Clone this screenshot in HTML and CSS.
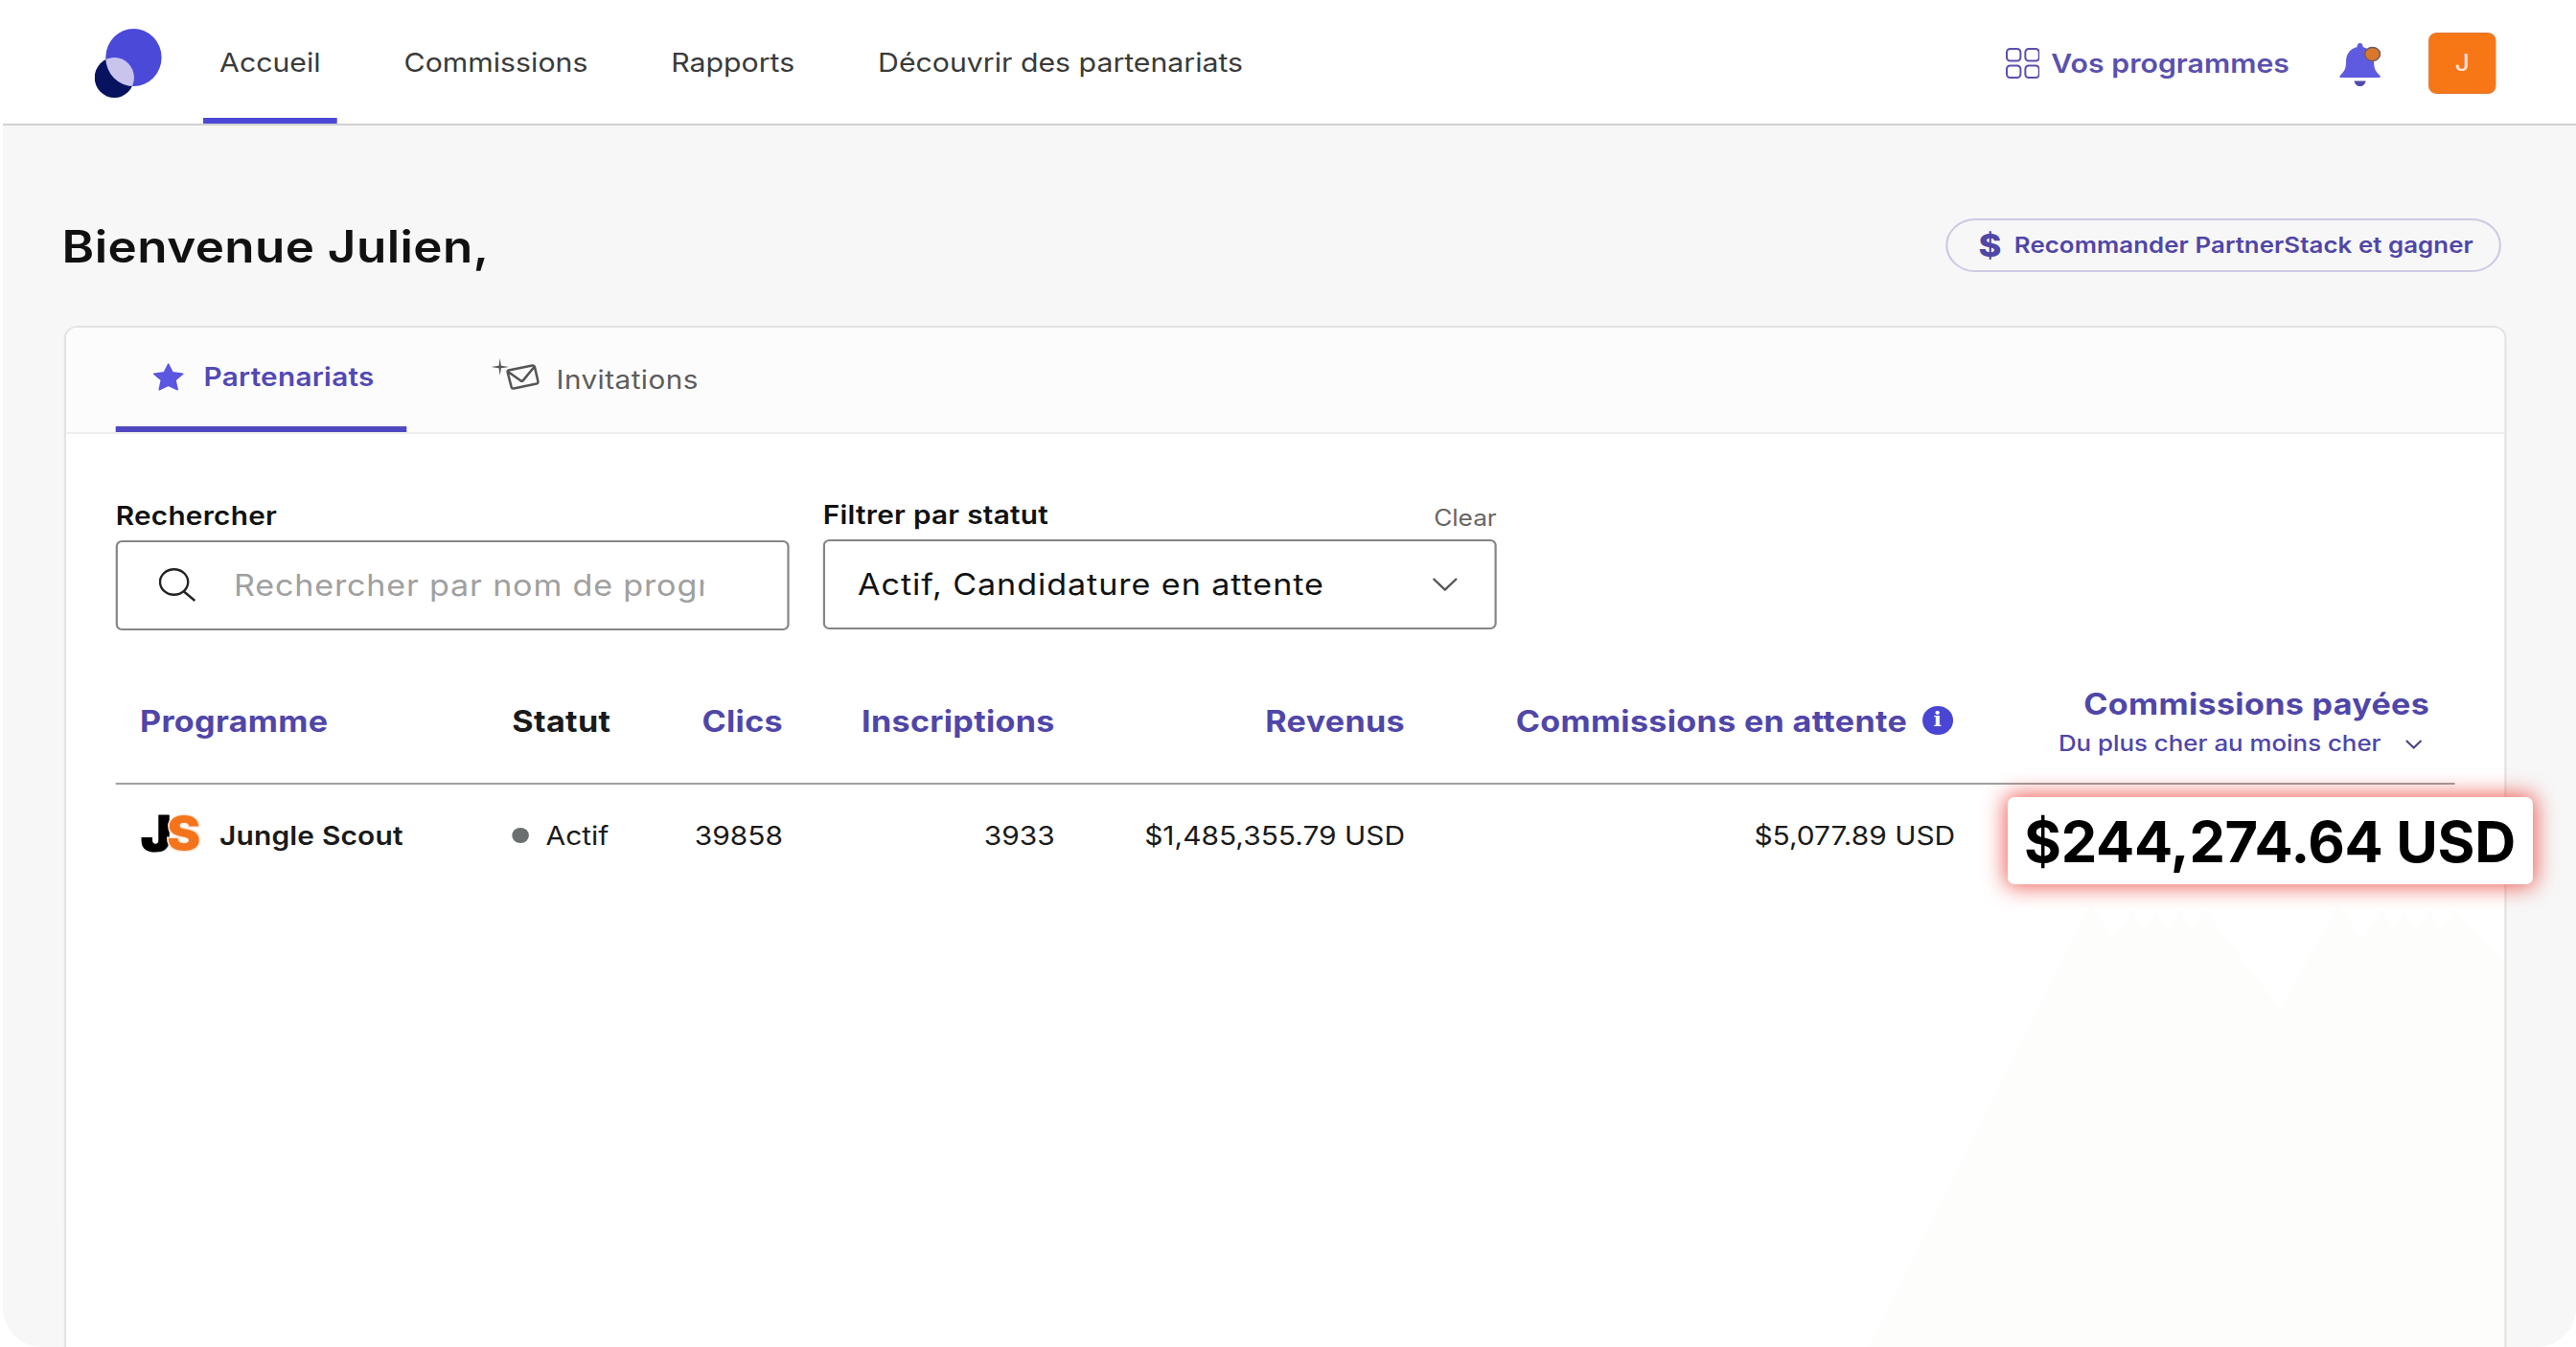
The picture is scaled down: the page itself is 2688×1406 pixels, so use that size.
FILE: index.html
```html
<!DOCTYPE html>
<html lang="fr">

<head>
    <meta charset="utf-8">
    <title>Accueil</title>
    <link rel="stylesheet" href="styles.css">
</head>

<body>
    <div class="app">
        <header class="topbar">
            <svg class="logo" viewBox="0 0 70 72" preserveAspectRatio="none">
                <defs>
                    <clipPath id="big"><ellipse cx="40.5" cy="30" rx="29" ry="30" /></clipPath>
                </defs>
                <ellipse cx="20.5" cy="51" rx="20.5" ry="21" fill="#07135f" />
                <ellipse cx="40.5" cy="30" rx="29" ry="30" fill="#4b49d8" />
                <ellipse cx="20.5" cy="51" rx="20.5" ry="21" fill="#c8c4ec" clip-path="url(#big)" />
            </svg>
            <nav class="nav">
                <a class="nav-link active">Accueil</a>
                <a class="nav-link">Commissions</a>
                <a class="nav-link">Rapports</a>
                <a class="nav-link">Découvrir des partenariats</a>
            </nav>
            <div class="account">
                <a class="programs">
                    <svg class="grid-icon" viewBox="0 0 36 32" preserveAspectRatio="none">
                        <rect x="1" y="1" width="14.5" height="12.5" rx="3.5" />
                        <rect x="20.5" y="1" width="14.5" height="12.5" rx="3.5" />
                        <rect x="1" y="18.5" width="14.5" height="12.5" rx="3.5" />
                        <rect x="20.5" y="18.5" width="14.5" height="12.5" rx="3.5" />
                    </svg>
                    <span>Vos programmes</span>
                </a>
                <svg class="bell" viewBox="0 0 44 45" preserveAspectRatio="none">
                    <path d="M22 0c-2 0-3 1.500-3 4C11 6 7.500 12 7.500 19c0 8-2 11-6.500 15v2h42v-2c-4.500-4-6.500-7-6.500-15 0-7-3.500-13-11.500-15 0-2.500-1-4-3-4z" fill="#5f5be0" />
                    <path d="M16 39.500h12c-.5 3.500-3 5.500-6 5.500s-5.500-2-6-5.500z" fill="#524aae" />
                    <ellipse cx="35" cy="11.500" rx="8" ry="7" fill="#d9772b" stroke="#6d5a63" stroke-width="1.500" />
                </svg>
                <div class="avatar">J</div>
            </div>
        </header>

        <main class="main">
            <div class="welcome">
                <h1>Bienvenue Julien,</h1>
                <a class="refer"><b class="dollar">$</b><span>Recommander PartnerStack et gagner</span></a>
            </div>

            <section class="panel">
                <!-- mountains in the corner of the panel -->
                <svg class="mountains" viewBox="0 0 664 466" preserveAspectRatio="none">
                    <path d="M0 466L232 5l24 35 20-30 12 18 12-16 12 18 14-20 12 20 14-20L430 113 490 5l26 35 20-30 12 18 12-16 12 18 14-20 12 20 14-20L664 60V466z" />
                </svg>

                <div class="tabs">
                    <a class="tab active">
                        <svg class="star" viewBox="0 0 34 29" preserveAspectRatio="none">
                            <path d="M17 1l4.600 8.800 11 1.400-8 6.500 2.200 10L17 23.200 7.200 27.700l2.200-10-8-6.500 11-1.400z" fill="#5b57e0" stroke="#5b57e0" stroke-width="1.500" stroke-linejoin="round" />
                        </svg>
                        <span>Partenariats</span>
                    </a>
                    <a class="tab invites">
                        <svg class="mail" viewBox="0 0 51 33" preserveAspectRatio="none">
                            <path d="M9.500 0l1.200 7.800 8.300 1.200-8.300 1.300L9.500 18 8.300 10.300 0 9l8.300-1.200z" fill="#555" />
                            <path d="M18.500 12.500L43.500 7.500q2-.3 2.500 1.500L49.500 24q.3 2-1.500 2.500L24 31.500q-2 .3-2.500-1.500L17.500 14.500q-.3-1.500 1-2zM18 14l13.500 9.500q1.500.8 2.500-.7L45.500 9" fill="none" stroke="#555" stroke-width="2.600" stroke-linejoin="round" stroke-linecap="round" />
                        </svg>
                        <span>Invitations</span>
                    </a>
                </div>

                <div class="content">
                    <div class="filters">
                        <div class="field">
                            <div class="label-row"><label>Rechercher</label></div>
                            <div class="box">
                                <svg class="search-icon" viewBox="0 0 39 35" preserveAspectRatio="none">
                                    <ellipse cx="16" cy="14.500" rx="14.800" ry="13.300" />
                                    <path d="M26.500 24.500L38 34" />
                                </svg>
                                <input type="text" class="search" placeholder="Rechercher par nom de programme">
                            </div>
                        </div>
                        <div class="field status">
                            <div class="label-row"><label>Filtrer par statut</label><a class="clear">Clear</a></div>
                            <div class="box select">
                                <span>Actif, Candidature en attente</span>
                                <svg class="chevron" viewBox="0 0 26 14" preserveAspectRatio="none"><path d="M1 1l12 11.500L25 1" /></svg>
                            </div>
                        </div>
                    </div>

                    <div class="row head">
                        <div>Programme</div>
                        <div class="dark">Statut</div>
                        <div class="num">Clics</div>
                        <div class="num">Inscriptions</div>
                        <div class="num">Revenus</div>
                        <div class="num pending"><span>Commissions en attente</span><i class="info">i</i></div>
                        <div class="num paid">
                            <span>Commissions payées</span>
                            <small><span>Du plus cher au moins cher</span><svg class="chevron-sm" viewBox="0 0 18 10" preserveAspectRatio="none"><path d="M1 1l8 7.500L17 1" /></svg></small>
                        </div>
                    </div>
                    <div class="row">
                        <div class="program">
                            <svg class="js-logo" viewBox="0 0 62 40" preserveAspectRatio="none">
                                <text class="js-j" transform="translate(1 38) scale(1.05 1)">J</text>
                                <text class="js-s" transform="translate(28.500 36.500) scale(1.1 1)">S</text>
                            </svg>
                            <span>Jungle Scout</span>
                        </div>
                        <div class="state"><i class="dot"></i><span>Actif</span></div>
                        <div class="num">39858</div>
                        <div class="num">3933</div>
                        <div class="num">$1,485,355.79 USD</div>
                        <div class="num">$5,077.89 USD</div>
                    </div>
                </div>
            </section>
        </main>
    </div>

    <div class="highlight">$244,274.64 USD</div>
</body>

</html>
```
FILE: styles.css
```css
* {
    box-sizing: border-box;
}

body {
    margin: 0;
    background-color: #ffffff;
    font-family: Inter, "Liberation Sans", sans-serif;
    color: #1a1a1a;
    overflow: hidden;
}

/* everything in the app is drawn a little wide */
.app {
    width: 2441px;
    height: 1406px;
    margin-left: 3px;
    background-color: #f7f7f7;
    border-radius: 37px / 41px;
    overflow: hidden;
    transform: scaleX(1.1);
    transform-origin: 0 0;
}

.topbar {
    display: flex;
    align-items: center;
    height: 131px;
    padding: 0 76px 0 87px;
    background-color: #ffffff;
    border-bottom: 2px solid #d0d0d5;
}

.logo {
    width: 64px;
    height: 72px;
    margin-top: 3px;
}

.nav {
    display: flex;
    align-self: stretch;
    gap: 47.5px;
    margin-left: 38.5px;
}

.nav-link {
    display: flex;
    align-items: center;
    padding: 7px 15.5px 0 16px;
    border-bottom: 6px solid transparent;
    font-size: 27.5px;
    color: #3a3a3a;
}

.nav-link.active {
    border-bottom-color: #4c49d6;
}

.account {
    display: flex;
    align-items: center;
    margin-left: auto;
}

.programs {
    display: flex;
    align-items: center;
    gap: 11px;
    padding-top: 2px;
    font-size: 27.5px;
    font-weight: 600;
    color: #5a50ae;
}

.grid-icon {
    width: 32.5px;
    height: 32px;
    fill: none;
    stroke: #5a50ae;
    stroke-width: 2;
}

.bell {
    width: 40px;
    height: 45px;
    margin: 6px 45px 0 47px;
}

.avatar {
    width: 64px;
    height: 64px;
    margin-top: 3px;
    border-radius: 8px;
    background-color: #f77615;
    border: 1.5px solid #e07a3a;
    color: #ffe3d0;
    font-size: 24px;
    font-weight: 500;
    line-height: 62px;
    text-align: center;
}

.main {
    padding: 97px 66px 0 58px;
}

.welcome {
    display: flex;
    align-items: center;
    justify-content: space-between;
    height: 56px;
    margin-bottom: 56px;
}

h1 {
    margin: 2px 0 0 -2px;
    font-size: 46.5px;
    font-weight: 600;
    letter-spacing: 0.4px;
    color: #111111;
}

.refer {
    display: flex;
    align-items: center;
    width: 527px;
    height: 56px;
    margin-right: 5px;
    padding: 0 0 1px 29px;
    border: 2px solid #cdcae4;
    border-radius: 28px;
    font-size: 23.5px;
    font-weight: 600;
    letter-spacing: 0.05px;
    color: #5046a5;
}

.dollar {
    width: 34px;
    font-size: 33px;
    font-weight: 800;
}

.panel {
    position: relative;
    height: 1100px;
    border: 2px solid #e3e3e3;
    border-radius: 13px;
    background-color: #ffffff;
    overflow: hidden;
}

.mountains {
    position: absolute;
    right: 0;
    top: 598px;
    width: 604px;
    height: 466px;
    fill: #fdfdfb;
}

.tabs {
    display: flex;
    gap: 46px;
    height: 111px;
    padding-left: 47px;
    background-color: #fcfcfc;
    border-bottom: 2px solid #eeeeee;
}

.tab {
    display: flex;
    align-items: center;
    padding: 0 34px;
    border-bottom: 6px solid transparent;
    font-size: 27px;
    color: #5c5c5c;
}

.tab.active {
    width: 276px;
    padding: 0 0 0 34.5px;
    border-bottom-color: #4f47c0;
    font-weight: 600;
    letter-spacing: 0.25px;
    color: #5249b4;
}

.invites {
    padding-top: 5px;
    letter-spacing: 0.4px;
}

.star {
    width: 30px;
    height: 29px;
    margin-right: 19px;
}

.mail {
    width: 46px;
    height: 33px;
    margin: -11px 16px 0 0;
}

.content {
    position: relative;
    padding: 61px 47px;
}

.filters {
    display: flex;
    gap: 32px;
}

.field {
    width: 639px;
}

.status {
    margin-top: -1px;
}

.label-row {
    display: flex;
    justify-content: space-between;
    height: 50px;
    line-height: 49px;
}

label {
    font-size: 27px;
    font-weight: 600;
    letter-spacing: 0.25px;
    color: #111111;
}

.clear {
    padding-top: 3px;
    font-size: 23.8px;
    color: #666666;
}

.box {
    display: flex;
    align-items: center;
    height: 94px;
    padding-bottom: 2px;
    border: 2px solid #858585;
    border-radius: 6px;
    background-color: #ffffff;
}

.search-icon {
    width: 35px;
    height: 35px;
    margin-left: 39px;
    fill: none;
    stroke: #222222;
    stroke-width: 2.4;
}

.search {
    width: 446px;
    height: 60px;
    margin-left: 36px;
    padding: 0;
    border: none;
    background: none;
    font-family: inherit;
    font-size: 31px;
    letter-spacing: 0.75px;
}

.search::placeholder {
    color: #a0a0a0;
}

.select {
    justify-content: space-between;
    padding: 0 35px 2px 31px;
    font-size: 31px;
    letter-spacing: 0.85px;
    color: #111111;
}

.chevron {
    width: 24px;
    height: 14px;
    margin-top: 2px;
    fill: none;
    stroke: #555555;
    stroke-width: 2.4;
}

.row {
    display: grid;
    grid-template-columns: 353px 145px 112px 258px 332px 522px 450px;
    align-items: center;
    height: 106px;
    padding-left: 23px;
    font-size: 27.2px;
}

.row.head {
    height: 132px;
    margin-top: 29px;
    border-bottom: 2px solid #a0a0a0;
    font-size: 31px;
    font-weight: 700;
    letter-spacing: 0.3px;
    color: #5046a8;
}

.row .dark {
    color: #1a1a1a;
}

.num {
    text-align: right;
}

.pending {
    display: flex;
    align-items: center;
    justify-content: flex-end;
}

.info {
    width: 29.5px;
    height: 30px;
    margin: 0 2px 0 14px;
    border-radius: 50%;
    background-color: #4a46d4;
    color: #ffffff;
    font: bold 20px/29px "DejaVu Serif", serif;
    text-align: center;
}

.paid {
    display: flex;
    flex-direction: column;
    align-items: flex-end;
    padding-top: 3px;
    line-height: 44px;
}

.paid small {
    display: flex;
    align-items: center;
    font-size: 23.5px;
    font-weight: 500;
    line-height: 38px;
    letter-spacing: 0;
}

.chevron-sm {
    width: 16px;
    height: 10px;
    margin: 3px 7px 0 23px;
    fill: none;
    stroke: #4a4488;
    stroke-width: 2.2;
}

.program {
    display: flex;
    align-items: center;
    font-weight: 600;
    letter-spacing: 0.15px;
}

.js-logo {
    width: 56px;
    height: 40px;
    margin-right: 19.5px;
    margin-top: -4px;
    overflow: visible;
}

.js-j {
    font-size: 51px;
    font-weight: 900;
    stroke: #000000;
    stroke-width: 1;
}

.js-s {
    font-size: 48px;
    font-weight: 900;
    fill: #f4741c;
    stroke: #ffe9dd;
    stroke-width: 3;
    paint-order: stroke;
}

.state {
    display: flex;
    align-items: center;
}

.dot {
    width: 16px;
    height: 16px;
    margin-right: 16px;
    border-radius: 50%;
    background-color: #6a706f;
}

.highlight {
    position: absolute;
    left: 2094.5px;
    top: 832px;
    width: 548px;
    height: 91px;
    border-radius: 7px;
    background-color: #ffffff;
    box-shadow: 0 0 22px 3px rgba(232, 50, 40, 0.75);
    font-size: 59.5px;
    font-weight: 700;
    letter-spacing: -0.3px;
    line-height: 92px;
    text-align: center;
    color: #000000;
    white-space: nowrap;
}
```
